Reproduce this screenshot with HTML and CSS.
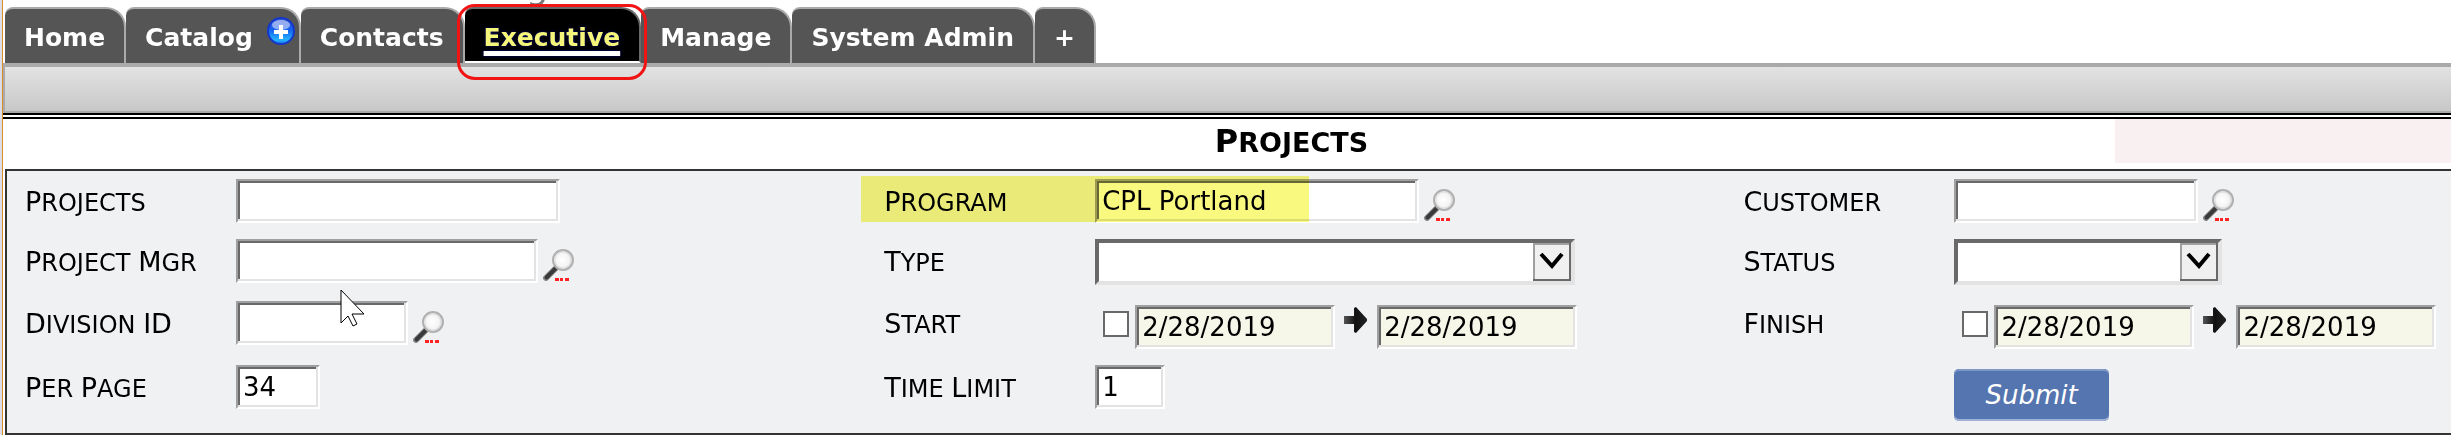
FILE: index.html
```html
<!DOCTYPE html>
<html lang="en">
<head>
    <meta charset="UTF-8">
    <meta name="viewport" content="width=device-width, initial-scale=1.0">
    <title>Projects</title>
    <link rel="stylesheet" href="styles.css">
</head>
<body>
    <!-- shared icons -->
    <svg class="defs" width="0" height="0" aria-hidden="true">
        <defs>
            <radialGradient id="glass" cx="45%" cy="50%" r="60%">
                <stop offset="0" stop-color="#ffffff"/>
                <stop offset="0.6" stop-color="#f4f4f4"/>
                <stop offset="1" stop-color="#c4c4c4"/>
            </radialGradient>
            <linearGradient id="blue" x1="0" y1="0" x2="0" y2="1">
                <stop offset="0" stop-color="#3a56d8"/>
                <stop offset="0.45" stop-color="#1560ee"/>
                <stop offset="0.85" stop-color="#25b4ff"/>
                <stop offset="1" stop-color="#1470e8"/>
            </linearGradient>
            <linearGradient id="dark" x1="0" y1="0" x2="1" y2="0">
                <stop offset="0" stop-color="#555"/>
                <stop offset="0.5" stop-color="#111"/>
                <stop offset="1" stop-color="#222"/>
            </linearGradient>
            <symbol id="search" viewBox="0 0 32 32">
                <path d="M3 29 14 18" stroke="#8a8a8a" stroke-width="6" stroke-linecap="round"/>
                <path d="M3.500 28.500 14 18" stroke="#3a3a3a" stroke-width="4" stroke-linecap="round"/>
                <circle cx="20" cy="11" r="10" fill="url(#glass)" stroke="#b0b0b0" stroke-width="2"/>
                <circle cx="20" cy="11" r="8" fill="none" stroke="#dedede"/>
                <path d="M12 29h4v3h-4zM17 29h3v3h-3zM22 29h4v3h-4z" fill="#f22"/>
            </symbol>
            <symbol id="arrow" viewBox="0 0 24 26">
                <path d="M0 9h10V1l2-1 11 12v2L12 26l-2-1v-8H0z" fill="url(#dark)"/>
            </symbol>
            <symbol id="drop" viewBox="0 0 38 38">
                <path d="M0 0h38v38H0z" fill="#696969"/>
                <path d="M0 0h36v36H0z" fill="#a0a0a0"/>
                <path d="M2 2h34v34H2z" fill="#f0f0f0"/>
                <path d="M8 11 19 23 29 11" fill="none" stroke="#000" stroke-width="4"/>
            </symbol>
        </defs>
    </svg>

    <div class="page">
        <span class="brand" aria-hidden="true">g</span>

        <nav class="tabs">
            <a class="tab" href="#">Home</a>
            <a class="tab tab-badge" href="#">Catalog
                <svg class="badge" width="28" height="28" viewBox="0 0 28 28" aria-hidden="true">
                    <circle cx="14" cy="14" r="13" fill="url(#blue)" stroke="#1438c8" stroke-width="2"/>
                    <ellipse cx="14" cy="8" rx="9" ry="5" fill="#fff" opacity="0.5"/>
                    <path d="M12 8h4v5h5v4h-5v5h-4v-5H7v-4h5z" fill="#fff"/>
                </svg>
            </a>
            <a class="tab" href="#">Contacts</a>
            <a class="tab active" href="#"><span class="tab-text">Executive</span></a>
            <a class="tab" href="#">Manage</a>
            <a class="tab" href="#">System Admin</a>
            <a class="tab" href="#">+</a>
        </nav>
        <div class="subbar"></div>

        <header class="title-row">
            <h1><span class="cap">P</span>rojects</h1>
            <div class="notice"></div>
        </header>

        <form class="filters">
            <div class="field">
                <label for="projects"><span class="cap">P</span>rojects</label>
                <div class="control"><input class="box wide" type="text" id="projects"></div>
            </div>
            <div class="field marked">
                <label for="program"><span class="cap">P</span>rogram</label>
                <div class="control">
                    <input class="box wide" type="text" id="program" value="CPL Portland">
                    <button class="lookup" type="button" aria-label="Look up program"><svg><use href="#search"/></svg></button>
                </div>
            </div>
            <div class="field">
                <label for="customer"><span class="cap">C</span>ustomer</label>
                <div class="control">
                    <input class="box medium" type="text" id="customer">
                    <button class="lookup" type="button" aria-label="Look up customer"><svg><use href="#search"/></svg></button>
                </div>
            </div>

            <div class="field">
                <label for="manager"><span class="cap">P</span>roject <span class="cap">M</span>gr</label>
                <div class="control">
                    <input class="box manager" type="text" id="manager">
                    <button class="lookup" type="button" aria-label="Look up project manager"><svg><use href="#search"/></svg></button>
                </div>
            </div>
            <div class="field">
                <label for="type"><span class="cap">T</span>ype</label>
                <div class="control">
                    <div class="select type"><select id="type"><option></option></select><svg><use href="#drop"/></svg></div>
                </div>
            </div>
            <div class="field">
                <label for="status"><span class="cap">S</span>tatus</label>
                <div class="control">
                    <div class="select status"><select id="status"><option></option></select><svg><use href="#drop"/></svg></div>
                </div>
            </div>

            <div class="field">
                <label for="division"><span class="cap">D</span>ivision <span class="cap">ID</span></label>
                <div class="control">
                    <input class="box division" type="text" id="division">
                    <button class="lookup" type="button" aria-label="Look up division"><svg><use href="#search"/></svg></button>
                </div>
            </div>
            <div class="field">
                <label for="start"><span class="cap">S</span>tart</label>
                <div class="control dates">
                    <input type="checkbox" id="start">
                    <input class="box date" type="text" value="2/28/2019" aria-label="Start from">
                    <svg class="arrow"><use href="#arrow"/></svg>
                    <input class="box date" type="text" value="2/28/2019" aria-label="Start to">
                </div>
            </div>
            <div class="field">
                <label for="finish"><span class="cap">F</span>inish</label>
                <div class="control dates">
                    <input type="checkbox" id="finish">
                    <input class="box date" type="text" value="2/28/2019" aria-label="Finish from">
                    <svg class="arrow"><use href="#arrow"/></svg>
                    <input class="box date" type="text" value="2/28/2019" aria-label="Finish to">
                </div>
            </div>

            <div class="field">
                <label for="perpage"><span class="cap">P</span>er <span class="cap">P</span>age</label>
                <div class="control"><input class="box perpage" type="text" id="perpage" value="34"></div>
            </div>
            <div class="field">
                <label for="limit"><span class="cap">T</span>ime <span class="cap">L</span>imit</label>
                <div class="control"><input class="box limit" type="text" id="limit" value="1"></div>
            </div>
            <div class="field submit-row">
                <button class="submit" type="submit">Submit</button>
            </div>
        </form>

        <svg class="pointer" width="26" height="40" viewBox="0 0 26 40" aria-hidden="true">
            <path d="M1 1v33l7-7 5 10 4-2-5-10h12z" fill="#fff" stroke="#000" stroke-width="1"/>
        </svg>
    </div>
</body>
</html>
```

FILE: styles.css
```css
* {
    box-sizing: border-box;
}
body {
    margin: 0;
    border-left: 2px solid #dcdce6;
    background: #fff;
    color: #000;
    font-family: Verdana, "DejaVu Sans", sans-serif;
    font-size: 26px;
}
.defs {
    position: absolute;
}
.page {
    position: relative;
    border-left: 1px solid #d98a2b;
    padding-top: 7px;
    overflow: hidden;
}
.brand {
    position: absolute;
    top: -30px;
    left: 523px;
    color: #777;
    font-size: 35px;
    line-height: 35px;
}

/* tabs */
.tabs {
    display: flex;
    padding-left: 2px;
}
.tab {
    position: relative;
    height: 56px;
    padding: 0 19px;
    border-top: 2px solid #aaa;
    border-right: 2px solid #aaa;
    border-radius: 8px 20px 0 0;
    background: #555;
    color: #fff;
    font-size: 25px;
    font-weight: bold;
    line-height: 58px;
    text-decoration: none;
    white-space: nowrap;
}
.tab-badge {
    padding-right: 46px;
}
.badge {
    position: absolute;
    top: 8px;
    right: 4px;
}
.active {
    border-color: #696969;
    border-bottom: 2px solid #fff;
    background: #000;
    color: #f5f57a;
}
.tab-text {
    text-decoration: underline 5px #fff;
    text-decoration-skip-ink: none;
    text-underline-offset: 5px;
    text-shadow: 0 0 3px #000080;
}
.active::after {
    content: "";
    position: absolute;
    z-index: 2;
    top: -5px;
    left: -8px;
    right: -8px;
    height: 70px;
    border: 3px solid #f01414;
    border-radius: 18px;
}
.subbar {
    height: 50px;
    border: solid #aaa;
    border-width: 4px 0 2px 2px;
    background: linear-gradient(#e2e2e2, #c8c8c8);
}

/* page title */
.title-row {
    display: grid;
    grid-template-columns: 19% 1fr 336px;
    border-top: 6px double #000;
    height: 56px;
}
h1 {
    grid-column: 2;
    margin: 0;
    font-size: 27px;
    line-height: 44px;
    text-align: center;
    text-transform: uppercase;
}
h1 .cap {
    font-size: 32px;
}
.notice {
    height: 44px;
    background: #f9f0f1;
}

/* filter panel */
.filters {
    display: grid;
    grid-template-columns: 17fr 17fr 14fr;
    row-gap: 16px;
    margin-left: 2px;
    padding: 8px 0 12px 18px;
    border: 2px solid #333;
    border-right: 0;
    background: #f0f1f3;
}
.field {
    position: relative;
    display: flex;
    align-items: flex-start;
    height: 44px;
}
.field:nth-child(n+4) {
    height: 46px;
}
.field:nth-child(n+7) {
    height: 48px;
}
.field:nth-child(n+10) {
    height: 56px;
}
label {
    width: 211px;
    font-size: 24px;
    line-height: 46px;
    text-transform: uppercase;
    white-space: nowrap;
}
label .cap {
    font-size: 27px;
}
.control {
    display: flex;
    align-items: flex-start;
}
.marked::after {
    content: "";
    position: absolute;
    top: -3px;
    left: -23px;
    width: 448px;
    height: 46px;
    background: #f9f87f;
    mix-blend-mode: multiply;
    pointer-events: none;
}
.box {
    height: 44px;
    padding: 0 5px;
    border: 2px solid;
    border-color: #a0a0a0 #fff #fff #a0a0a0;
    border-radius: 0;
    box-shadow: inset -2px -2px 0 #e3e3e3, inset 2px 2px 0 #696969;
    background: #fff;
    color: #000;
    font: inherit;
}
.wide {
    width: 324px;
}
.manager {
    width: 302px;
}
.medium {
    width: 244px;
}
.division {
    width: 172px;
}
.perpage {
    width: 84px;
}
.limit {
    width: 70px;
}
.date {
    width: 200px;
    background: #f6f7e8;
}
.lookup {
    margin: 10px 0 0 5px;
    padding: 0;
    border: 0;
    background: none;
    line-height: 0;
    cursor: pointer;
}
.lookup svg {
    width: 32px;
    height: 32px;
}
.select {
    position: relative;
    height: 46px;
}
.select select {
    width: 100%;
    height: 46px;
    border: 4px solid;
    border-color: #696969 #e3e3e3 #e3e3e3 #696969;
    border-radius: 0;
    appearance: none;
    background: #fff;
    font: inherit;
}
.select svg {
    position: absolute;
    top: 4px;
    right: 4px;
    width: 38px;
    height: 38px;
    pointer-events: none;
}
.type {
    width: 480px;
}
.status {
    width: 268px;
}
.dates {
    padding-top: 4px;
}
.dates input[type="checkbox"] {
    appearance: none;
    width: 26px;
    height: 26px;
    margin: 6px 6px 0 8px;
    border: 2px solid #696969;
    background: #fff;
}
.arrow {
    width: 24px;
    height: 26px;
    margin: 2px 9px 0;
}
.submit-row {
    padding: 4px 0 0 211px;
}
.submit {
    height: 52px;
    padding: 0 31px;
    border: 0;
    border-radius: 5px;
    background: #5575b0;
    box-shadow: inset 0 2px 0 #7d96c6, inset 0 -2px 0 #9fb1d6;
    color: #fff;
    font: inherit;
    font-style: italic;
}
.pointer {
    position: absolute;
    top: 289px;
    left: 337px;
}
```
